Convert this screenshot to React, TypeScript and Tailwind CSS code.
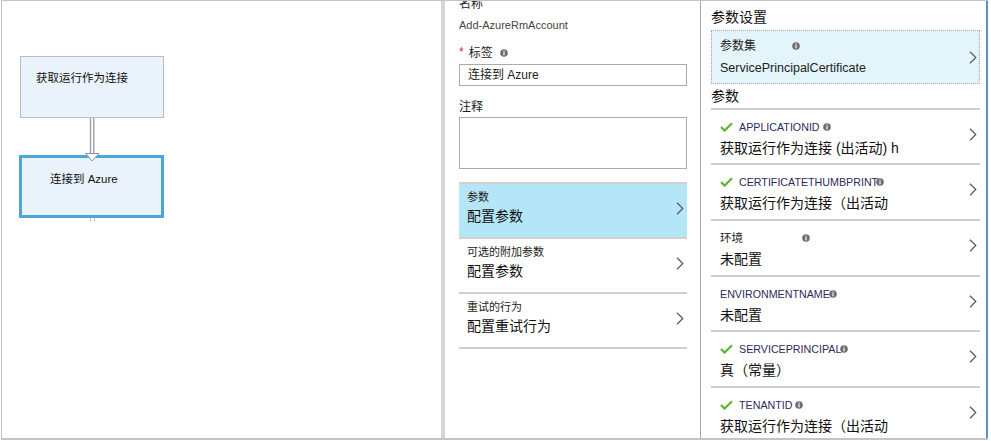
import React from 'react';

const Chevron = () => (
  <svg width="8" height="13" viewBox="0 0 8 13" className="shrink-0">
    <path d="M1 0.8 L6.8 6.5 L1 12.2" fill="none" stroke="#5a5a5a" strokeWidth="1.2" />
  </svg>
);

const Check = () => (
  <svg width="13" height="10" viewBox="0 0 13 10" className="shrink-0">
    <path d="M1 5 L4.6 8.6 L12 1.2" fill="none" stroke="#5fb630" strokeWidth="2.2" />
  </svg>
);

const Info = () => (
  <svg width="8" height="8" viewBox="0 0 8 8" className="shrink-0">
    <circle cx="4" cy="4" r="3.8" fill="#6e6e6e" />
    <rect x="3.4" y="1.5" width="1.2" height="1.1" fill="#fff" />
    <rect x="3.4" y="3.2" width="1.2" height="3.2" fill="#fff" />
  </svg>
);

type Row = {
  label: string;
  value: string;
  check?: boolean;
  upper?: boolean;
  infoGap: string;
  h: string;
};

const rows: Row[] = [
  { label: 'APPLICATIONID', value: '获取运行作为连接 (出活动) h', check: true, upper: true, infoGap: 'ml-[3px]', h: 'h-[55px]' },
  { label: 'CERTIFICATETHUMBPRINT', value: '获取运行作为连接（出活动', check: true, upper: true, infoGap: '-ml-[2px]', h: 'h-[56px]' },
  { label: '环境', value: '未配置', infoGap: 'ml-[59px]', h: 'h-[56px]' },
  { label: 'ENVIRONMENTNAME', value: '未配置', upper: true, infoGap: '-ml-px', h: 'h-[55px]' },
  { label: 'SERVICEPRINCIPAL', value: '真（常量）', check: true, upper: true, infoGap: '-ml-px', h: 'h-[56px]' },
  { label: 'TENANTID', value: '获取运行作为连接（出活动', check: true, upper: true, infoGap: 'ml-[3px]', h: 'h-[56px]' },
];

const menu = [
  { label: '参数', value: '配置参数', active: true },
  { label: '可选的附加参数', value: '配置参数' },
  { label: '重试的行为', value: '配置重试行为' },
];

function Canvas() {
  return (
    <div className="w-[439px] shrink-0 h-full pl-[18px] pt-[55px] overflow-hidden">
      <div className="w-[144px] h-[62px] border border-[#b5bccb] bg-[#eaf3fb] pl-[15px] pt-[13px] text-[11.5px] leading-[16px] text-[#111]">
        获取运行作为连接
      </div>
      <svg width="144" height="37" viewBox="0 0 144 37" className="relative z-10 block overflow-visible">
        <line x1="70.5" y1="0" x2="70.5" y2="36" stroke="#9aa0a8" strokeWidth="1.4" />
        <line x1="73.8" y1="0" x2="73.8" y2="36" stroke="#9aa0a8" strokeWidth="1.4" />
        <polygon points="65.5,35.5 79,35.5 72.2,43" fill="#fff" stroke="#8a9098" strokeWidth="1" />
      </svg>
      <div className="w-[145px] -ml-px h-[63px] border-[3px] border-[#4ea5de] bg-[#eaf3fb] pl-[28px] pt-[13px] text-[11.5px] leading-[16px] text-[#111]">
        连接到 Azure
      </div>
      <div className="ml-[70px] w-[5px] h-[3px] border-x border-[#b8b8b8]" />
    </div>
  );
}

function Middle() {
  return (
    <div className="w-[256px] shrink-0 h-full border-r border-[#a8a8a8] pl-[14px] pr-[13px] overflow-hidden">
      <div className="-mt-[4px] text-[12px] leading-[14px] text-[#222]">名称</div>
      <div className="mt-[6px] text-[11px] leading-[16px] text-[#444]">Add-AzureRmAccount</div>
      <div className="mt-[12px] h-[16px] flex items-center text-[12px] leading-[16px]">
        <span className="text-[#e0262c] -mt-[3px]">*</span>
        <span className="ml-[5px] text-[#222]">标签</span>
        <span className="ml-[7px]"><Info /></span>
      </div>
      <div className="mt-[3px] h-[22px] border border-[#ababab] pl-[8px] flex items-center text-[12px] leading-[16px] text-[#222]">
        连接到 Azure
      </div>
      <div className="mt-[13px] text-[12px] leading-[16px] text-[#222]">注释</div>
      <div className="mt-[2px] h-[52px] border border-[#ababab]" />
      <div className="mt-[13px] border-t-2 border-[#d0d0d0]">
        {menu.map((m) => (
          <div
            key={m.label}
            className={`h-[55px] border-b-2 border-[#d0d0d0] flex items-center justify-between pl-[8px] pr-[3px] ${m.active ? 'bg-[#b4e6f7]' : ''}`}
          >
            <div className="self-start pt-[6px]">
              <div className="text-[11px] leading-[14px] text-[#222]">{m.label}</div>
              <div className="mt-[3px] text-[14px] leading-[18px] text-[#111]">{m.value}</div>
            </div>
            <div className="mb-[5px]"><Chevron /></div>
          </div>
        ))}
      </div>
    </div>
  );
}

function Right() {
  return (
    <div className="flex-1 h-full border-r-2 border-[#5b91c4] pl-[10px] pr-[6px] overflow-hidden">
      <div className="pt-[7px] text-[14px] leading-[18px] text-[#111]">参数设置</div>
      <div className="mt-[4px] h-[54px] border border-dotted border-[#a4a4a4] bg-[#e3f4fb] flex items-center justify-between pl-[8px] pr-[2px]">
        <div className="self-start pt-[7px]">
          <div className="flex items-center h-[16px] text-[12px] leading-[16px] text-[#222]">
            <span>参数集</span>
            <span className="ml-[36px]"><Info /></span>
          </div>
          <div className="mt-[5px] text-[12.5px] leading-[18px] text-[#222]">ServicePrincipalCertificate</div>
        </div>
        <Chevron />
      </div>
      <div className="mt-[3px] text-[14px] leading-[18px] text-[#111]">参数</div>
      <div className="mt-[3px] border-t-2 border-[#cdcdcd]">
        {rows.map((r) => (
          <div
            key={r.label}
            className={`${r.h} border-b-2 border-[#cdcdcd] flex items-center justify-between pl-[9px] pr-[3px]`}
          >
            <div className="self-start pt-[10px]">
              <div
                className={`flex items-center h-[14px] leading-[14px] ${
                  r.upper ? 'text-[10.7px] text-[#2c2b5c]' : 'text-[11.5px] text-[#222]'
                }`}
              >
                {r.check && <span className="mr-[6px]"><Check /></span>}
                <span>{r.label}</span>
                <span className={r.infoGap}><Info /></span>
              </div>
              <div className="mt-[5px] text-[14px] leading-[18px] text-[#111]">{r.value}</div>
            </div>
            <div className="mb-[5px]"><Chevron /></div>
          </div>
        ))}
      </div>
    </div>
  );
}

export default function App() {
  return (
    <div className="w-[991px] h-[441px] bg-white overflow-hidden font-['Liberation_Sans','Noto_Sans_CJK_SC',sans-serif]">
      <div className="flex w-[987px] h-[440px] ml-px border-t border-l border-b-2 border-[#c4c4c4]">
        <Canvas />
        <div className="w-[4px] shrink-0 h-full bg-[#d6d6d9]" />
        <Middle />
        <Right />
      </div>
    </div>
  );
}
